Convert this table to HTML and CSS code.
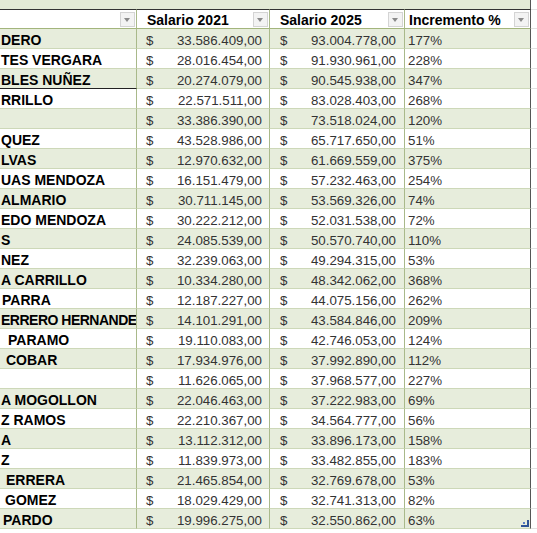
FILE: index.html
```html
<!DOCTYPE html>
<html lang="es">
<head>
    <meta charset="UTF-8">
    <meta name="viewport" content="width=device-width, initial-scale=1.0">
    <title>Salarios</title>
    <link rel="stylesheet" href="styles.css">
</head>
<body>
    <div class="strip"></div>
    <div class="sheet">
        <div class="row head">
            <div class="cell c1"><span class="label"></span><span class="drop"></span></div>
            <div class="cell c2"><span class="label">Salario 2021</span><span class="drop"></span></div>
            <div class="cell c3"><span class="label">Salario 2025</span><span class="drop"></span></div>
            <div class="cell c4"><span class="label">Incremento %</span><span class="drop"></span></div>
            <div class="cell rest"></div>
        </div>
        <div id="body"></div>
        <svg class="handle" width="8" height="7" viewBox="0 0 8 7">
            <path d="M8 0 L8 7 L0 7 L0 5 L6 5 L6 0 Z" fill="#2f5597"/>
            <rect x="2" y="2" width="2" height="2" fill="#5b7fc0"/>
        </svg>
    </div>

    <script>
        // [name fragment, salario 2021, salario 2025, incremento, indent px]
        const rows = [
            ['DERO', '33.586.409,00', '93.004.778,00', '177%', 1],
            ['TES VERGARA', '28.016.454,00', '91.930.961,00', '228%', 1],
            ['BLES NUÑEZ', '20.274.079,00', '90.545.938,00', '347%', 1],
            ['RRILLO', '22.571.511,00', '83.028.403,00', '268%', 1],
            ['', '33.386.390,00', '73.518.024,00', '120%', 1],
            ['QUEZ', '43.528.986,00', '65.717.650,00', '51%', 1],
            ['LVAS', '12.970.632,00', '61.669.559,00', '375%', 1],
            ['UAS MENDOZA', '16.151.479,00', '57.232.463,00', '254%', 1],
            ['ALMARIO', '30.711.145,00', '53.569.326,00', '74%', 1],
            ['EDO MENDOZA', '30.222.212,00', '52.031.538,00', '72%', 1],
            ['S', '24.085.539,00', '50.570.740,00', '110%', 1],
            ['NEZ', '32.239.063,00', '49.294.315,00', '53%', 1],
            ['A CARRILLO', '10.334.280,00', '48.342.062,00', '368%', 1],
            ['PARRA', '12.187.227,00', '44.075.156,00', '262%', 2],
            ['ERRERO HERNANDE', '14.101.291,00', '43.584.846,00', '209%', 1],
            ['PARAMO', '19.110.083,00', '42.746.053,00', '124%', 8],
            ['COBAR', '17.934.976,00', '37.992.890,00', '112%', 6],
            ['', '11.626.065,00', '37.968.577,00', '227%', 1],
            ['A MOGOLLON', '22.046.463,00', '37.222.983,00', '69%', 1],
            ['Z RAMOS', '22.210.367,00', '34.564.777,00', '56%', 1],
            ['A', '13.112.312,00', '33.896.173,00', '158%', 1],
            ['Z', '11.839.973,00', '33.482.855,00', '183%', 1],
            ['ERRERA', '21.465.854,00', '32.769.678,00', '53%', 6],
            ['GOMEZ', '18.029.429,00', '32.741.313,00', '82%', 5],
            ['PARDO', '19.996.275,00', '32.550.862,00', '63%', 3]
        ];

        const body = document.getElementById('body');
        let html = '';
        rows.forEach((r, i) => {
            let extra = '';
            if (i === 2) extra += ' marked';
            if (r[0].length > 14) extra += ' tight';
            html += `
                <div class="row">
                    <div class="cell c1 name${extra}" style="padding-left:${r[4]}px">${r[0]}</div>
                    <div class="cell c2 money"><span>$</span><span>${r[1]}</span></div>
                    <div class="cell c3 money"><span>$</span><span>${r[2]}</span></div>
                    <div class="cell c4 pct">${r[3]}</div>
                    <div class="cell rest"></div>
                </div>
            `;
        });
        body.innerHTML = html;
    </script>
</body>
</html>
```

FILE: styles.css
```css
body {
    margin: 0;
    background: #fff;
    font-family: "Liberation Sans", Arial, sans-serif;
    color: #111;
}
.strip {
    height: 9px;
    background: #e3ead6;
    border-right: 1px solid #555;
    width: 531px;
    box-sizing: border-box;
}
.sheet {
    position: relative;
}
.row {
    display: grid;
    grid-template-columns: 137px 133px 135px 126px 1fr;
    height: 20px;
}
.cell {
    box-sizing: border-box;
    height: 20px;
    border-right: 1px solid #a9b98a;
    border-bottom: 1px solid #cdd8b8;
    padding-top: 4px;
    line-height: 15px;
    white-space: nowrap;
    overflow: hidden;
}
.c4 { border-right-color: #555; }
.rest {
    border-right: none;
    border-bottom-color: #e2e2e2;
    background: #fff !important;
}
#body .row:nth-child(odd) .cell { background: #e7eddc; }

/* header */
.head .cell {
    display: flex;
    justify-content: space-between;
    align-items: flex-start;
    background: #fff;
    border-top: 1px solid #333;
    border-bottom: 1px solid #a3b57c;
    padding-top: 3px;
    font-weight: bold;
    font-size: 14px;
    color: #000;
}
.head .rest { border-top-color: #e2e2e2; border-bottom-color: #e2e2e2; }
.head .c2, .head .c3 { padding-left: 10px; }
.head .c4 { padding-left: 4px; }
.drop {
    width: 15px;
    height: 15px;
    margin-top: -1px;
    margin-right: 1px;
    box-sizing: border-box;
    border: 1px solid #d4d4d4;
    background: #f3f3f3;
    position: relative;
}
.drop::after {
    content: "";
    position: absolute;
    left: 3px;
    top: 5px;
    border-left: 3.5px solid transparent;
    border-right: 3.5px solid transparent;
    border-top: 4px solid #8a8a8a;
}

/* body cells */
.name {
    font-weight: bold;
    font-size: 14px;
    color: #000;
}
.tight { letter-spacing: -0.5px; }
.marked { border-bottom-color: #222; }
.money {
    display: flex;
    justify-content: space-between;
    font-size: 13.3px;
    color: #333;
}
.c2.money { padding-left: 9px; padding-right: 7px; }
.c3.money { padding-left: 10px; padding-right: 8px; }
.pct {
    font-size: 13.3px;
    color: #333;
    padding-left: 3px;
}
.handle {
    position: absolute;
    left: 521px;
    top: 511px;
}
```
